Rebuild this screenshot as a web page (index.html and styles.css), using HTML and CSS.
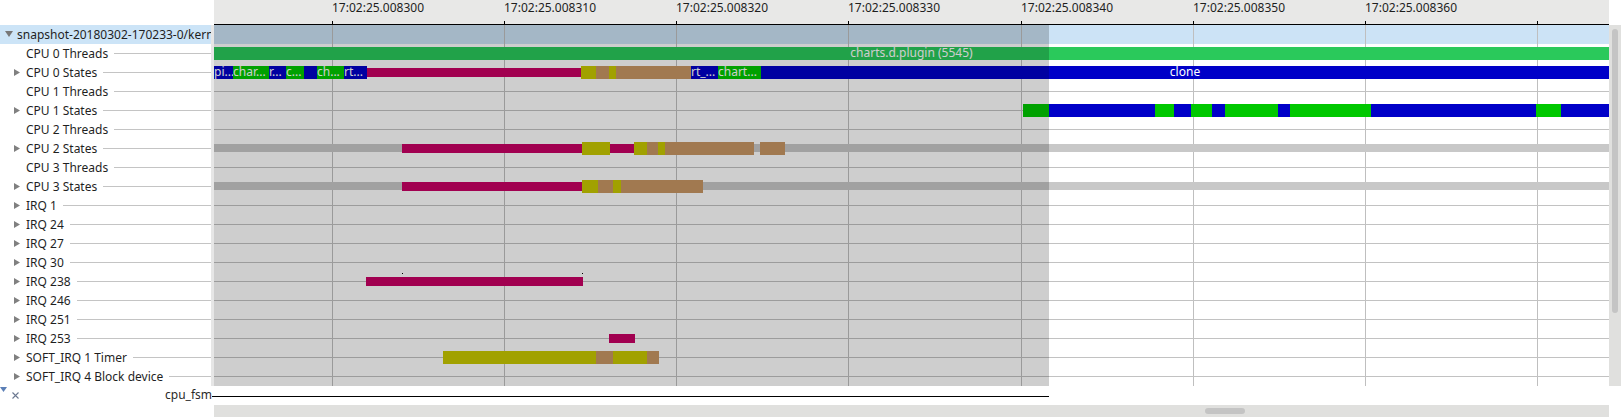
FILE: index.html
```html
<!DOCTYPE html>
<html>
<head>
<meta charset="utf-8">
<title>Resources</title>
<link rel="stylesheet" href="styles.css">
</head>
<body>
<div class="app">
  <div class="top">
    <div class="top-left"></div>
    <div class="ruler">
      <div class="tick" style="left:118px"><span>17:02:25.008300</span></div>
      <div class="tick" style="left:290px"><span>17:02:25.008310</span></div>
      <div class="tick" style="left:462px"><span>17:02:25.008320</span></div>
      <div class="tick" style="left:634px"><span>17:02:25.008330</span></div>
      <div class="tick" style="left:807px"><span>17:02:25.008340</span></div>
      <div class="tick" style="left:979px"><span>17:02:25.008350</span></div>
      <div class="tick" style="left:1151px"><span>17:02:25.008360</span></div>
      <div class="tick" style="left:1323px"></div>
    </div>
    <div class="top-right"></div>
  </div>

  <div class="main">
    <div class="labels">
      <div class="lrow sel"><i class="tri-down"></i><span class="name">snapshot-20180302-170233-0/kernel</span></div>
      <div class="lrow"><i class="tri"></i><span class="name">CPU 0 Threads</span><b class="rule"></b></div>
      <div class="lrow"><i class="tri r"></i><span class="name">CPU 0 States</span><b class="rule"></b></div>
      <div class="lrow"><i class="tri"></i><span class="name">CPU 1 Threads</span><b class="rule"></b></div>
      <div class="lrow"><i class="tri r"></i><span class="name">CPU 1 States</span><b class="rule"></b></div>
      <div class="lrow"><i class="tri"></i><span class="name">CPU 2 Threads</span><b class="rule"></b></div>
      <div class="lrow"><i class="tri r"></i><span class="name">CPU 2 States</span><b class="rule"></b></div>
      <div class="lrow"><i class="tri"></i><span class="name">CPU 3 Threads</span><b class="rule"></b></div>
      <div class="lrow"><i class="tri r"></i><span class="name">CPU 3 States</span><b class="rule"></b></div>
      <div class="lrow"><i class="tri r"></i><span class="name">IRQ 1</span><b class="rule"></b></div>
      <div class="lrow"><i class="tri r"></i><span class="name">IRQ 24</span><b class="rule"></b></div>
      <div class="lrow"><i class="tri r"></i><span class="name">IRQ 27</span><b class="rule"></b></div>
      <div class="lrow"><i class="tri r"></i><span class="name">IRQ 30</span><b class="rule"></b></div>
      <div class="lrow"><i class="tri r"></i><span class="name">IRQ 238</span><b class="rule"></b></div>
      <div class="lrow"><i class="tri r"></i><span class="name">IRQ 246</span><b class="rule"></b></div>
      <div class="lrow"><i class="tri r"></i><span class="name">IRQ 251</span><b class="rule"></b></div>
      <div class="lrow"><i class="tri r"></i><span class="name">IRQ 253</span><b class="rule"></b></div>
      <div class="lrow"><i class="tri r"></i><span class="name">SOFT_IRQ 1 Timer</span><b class="rule"></b></div>
      <div class="lrow"><i class="tri r"></i><span class="name">SOFT_IRQ 4 Block device</span><b class="rule"></b></div>
    </div>
    <div class="sash"></div>
    <div class="canvas">
      <div class="selbg"></div>
      <div class="vl" style="left:118px"></div>
      <div class="vl" style="left:290px"></div>
      <div class="vl" style="left:462px"></div>
      <div class="vl" style="left:634px"></div>
      <div class="vl" style="left:807px"></div>
      <div class="vl" style="left:979px"></div>
      <div class="vl" style="left:1151px"></div>
      <div class="vl" style="left:1323px"></div>
      <div class="trows">
        <div class="trow nl"></div>
        <div class="trow">
          <div class="b h13 tgreen c" style="left:0;width:1395px">charts.d.plugin (5545)</div>
        </div>
        <div class="trow">
          <div class="b h13 blue" style="left:0;width:19px">pi...</div>
          <div class="b h13 green" style="left:19px;width:36px">char...</div>
          <div class="b h13 blue" style="left:55px;width:17px">r...</div>
          <div class="b h13 green" style="left:72px;width:18px">c...</div>
          <div class="b h13 blue" style="left:90px;width:13px"></div>
          <div class="b h13 green" style="left:103px;width:27px">ch...</div>
          <div class="b h13 blue" style="left:130px;width:23px">rt...</div>
          <div class="b h9 mag" style="left:153px;width:214px"></div>
          <div class="b h13 olive" style="left:367px;width:15px"></div>
          <div class="b h13 brown" style="left:382px;width:13px"></div>
          <div class="b h13 olive" style="left:395px;width:7px"></div>
          <div class="b h13 brown" style="left:402px;width:75px"></div>
          <div class="b h13 blue" style="left:477px;width:27px">rt_...</div>
          <div class="b h13 green" style="left:504px;width:43px">chart...</div>
          <div class="b h13 blue c" style="left:547px;width:848px">clone</div>
        </div>
        <div class="trow"></div>
        <div class="trow">
          <div class="b h13 green" style="left:809px;width:26px"></div>
          <div class="b h13 blue" style="left:835px;width:106px"></div>
          <div class="b h13 green" style="left:941px;width:19px"></div>
          <div class="b h13 blue" style="left:960px;width:17px"></div>
          <div class="b h13 green" style="left:977px;width:21px"></div>
          <div class="b h13 blue" style="left:998px;width:13px"></div>
          <div class="b h13 green" style="left:1011px;width:53px"></div>
          <div class="b h13 blue" style="left:1064px;width:12px"></div>
          <div class="b h13 green" style="left:1076px;width:81px"></div>
          <div class="b h13 blue" style="left:1157px;width:165px"></div>
          <div class="b h13 green" style="left:1322px;width:25px"></div>
          <div class="b h13 blue" style="left:1347px;width:48px"></div>
        </div>
        <div class="trow"></div>
        <div class="trow">
          <div class="b h8 idle" style="left:0;width:188px"></div>
          <div class="b h9 mag" style="left:188px;width:180px"></div>
          <div class="b h13 olive" style="left:368px;width:28px"></div>
          <div class="b h9 mag" style="left:396px;width:24px"></div>
          <div class="b h13 olive" style="left:420px;width:13px"></div>
          <div class="b h13 brown" style="left:433px;width:11px"></div>
          <div class="b h13 olive" style="left:444px;width:7px"></div>
          <div class="b h13 brown" style="left:451px;width:89px"></div>
          <div class="b h8 idle" style="left:540px;width:6px"></div>
          <div class="b h13 brown" style="left:546px;width:25px"></div>
          <div class="b h8 idle" style="left:571px;width:824px"></div>
        </div>
        <div class="trow"></div>
        <div class="trow">
          <div class="b h8 idle" style="left:0;width:188px"></div>
          <div class="b h9 mag" style="left:188px;width:180px"></div>
          <div class="b h13 olive" style="left:368px;width:16px"></div>
          <div class="b h13 brown" style="left:384px;width:15px"></div>
          <div class="b h13 olive" style="left:399px;width:8px"></div>
          <div class="b h13 brown" style="left:407px;width:82px"></div>
          <div class="b h8 idle" style="left:489px;width:906px"></div>
        </div>
        <div class="trow"></div>
        <div class="trow"></div>
        <div class="trow"></div>
        <div class="trow"></div>
        <div class="trow">
          <i class="dot" style="left:188px"></i>
          <i class="dot" style="left:368px"></i>
          <div class="b h9 mag" style="left:152px;width:217px"></div>
        </div>
        <div class="trow"></div>
        <div class="trow"></div>
        <div class="trow">
          <div class="b h9 mag" style="left:395px;width:26px"></div>
        </div>
        <div class="trow">
          <div class="b h13 olive" style="left:229px;width:153px"></div>
          <div class="b h13 brown" style="left:382px;width:17px"></div>
          <div class="b h13 olive" style="left:399px;width:34px"></div>
          <div class="b h13 brown" style="left:433px;width:12px"></div>
        </div>
        <div class="trow"></div>
      </div>
      <div class="shade"></div>
    </div>
    <div class="vscroll"><div class="vthumb"></div></div>
  </div>

  <div class="bottom">
    <div class="bl">
      <div class="icons">
        <i class="menu-tri"></i>
        <svg class="close" width="7" height="7" viewBox="0 0 7 7"><path d="M0.5 0.5 L6.5 6.5 M6.5 0.5 L0.5 6.5" stroke="#6b7890" stroke-width="1.1" fill="none"/></svg>
      </div>
      <span class="fsm">cpu_fsm</span>
    </div>
    <div class="fsmline"></div>
  </div>

  <div class="hsrow">
    <div class="hsleft"></div>
    <div class="hscroll"><div class="hthumb"></div></div>
  </div>
</div>
</body>
</html>
```

FILE: styles.css
```css
* { box-sizing: border-box; margin: 0; padding: 0; }
html, body { width: 1621px; height: 417px; overflow: hidden; background: #fff; }
body { font-family: "Noto Sans", "DejaVu Sans", sans-serif; font-size: 12px; color: #1f1f1f; }

.app { display: flex; flex-direction: column; width: 1621px; height: 417px; }

/* header / time ruler */
.top { display: flex; height: 25px; }
.top-left { width: 214px; flex: none; }
.top-right { width: 12px; flex: none; }
.ruler { position: relative; width: 1395px; height: 25px; flex: none; background: #e8e8e7; border-bottom: 1px solid #000; }
.tick { position: absolute; top: 0; width: 1px; height: 24px; }
.tick::after { content: ""; position: absolute; left: 0; bottom: 0; width: 1px; height: 3px; background: #000; }
.tick span { position: absolute; left: 0; top: 0; line-height: 15px; white-space: nowrap; color: #1e1e1e; }

/* main area */
.main { display: flex; height: 361px; }
.labels { width: 211px; flex: none; display: flex; flex-direction: column; overflow: hidden; background: #fff; }
.lrow { height: 19px; flex: none; display: flex; align-items: center; padding-left: 14px; white-space: nowrap; overflow: hidden; }
.lrow.sel { background: #cce4f7; padding-left: 5px; }
.name { line-height: 16px; }
.tri { display: block; flex: none; width: 6px; height: 7px; margin-right: 6px; }
.tri.r { background: #808080; clip-path: polygon(0 0, 100% 50%, 0 100%); }
.tri-down { display: block; flex: none; width: 8px; height: 6px; margin: -1px 4px 0 0; background: #777; clip-path: polygon(0 0, 100% 0, 50% 100%); }
.rule { display: block; flex: 1; height: 1px; margin-left: 6px; background: #c4c4c4; }

.sash { width: 3px; flex: none; background: #e6e6e6; }

.canvas { position: relative; width: 1395px; height: 361px; flex: none; overflow: hidden; background: #fff; }
.selbg { position: absolute; left: 0; top: 0; width: 100%; height: 19px; background: #cce3f6; }
.vl { position: absolute; top: 0; bottom: 0; width: 1px; background: #bfbfbf; }
.trows { position: relative; display: flex; flex-direction: column; }
.trow { position: relative; height: 19px; flex: none; }
.trow::before { content: ""; position: absolute; left: 0; right: 0; top: 9px; height: 1px; background: #c2c2c2; }
.trow.nl::before { display: none; }
.dot { position: absolute; top: 1px; width: 1px; height: 1px; background: #000; }

.b { position: absolute; overflow: hidden; white-space: nowrap; color: #fff; font-size: 12px; line-height: 11px; }
.b.c { text-align: center; }
.h13 { top: 3px; height: 13px; }
.h9 { top: 5px; height: 9px; }
.h8 { top: 5px; height: 8px; }
.tgreen { background: #2ac95b; }
.blue { background: #0000c8; }
.green { background: #00c800; }
.mag { background: #c80064; }
.olive { background: #c8c800; }
.brown { background: #c89664; }
.idle { background: #c8c8c8; }

.shade { position: absolute; left: 0; top: 0; width: 835px; height: 361px; background: rgba(0, 0, 0, 0.192); }

.vscroll { width: 12px; flex: none; height: 361px; background: #e0e0de; padding: 4px 3px 0 3px; }
.vthumb { width: 6px; height: 284px; border-radius: 3px; background: #c4c4c4; }

/* bottom marker row */
.bottom { display: flex; height: 19px; }
.bl { width: 212px; flex: none; display: flex; align-items: flex-start; }
.icons { display: flex; align-items: flex-start; width: 30px; }
.menu-tri { display: block; width: 7px; height: 5px; margin-top: 1px; background: #5b7fb6; clip-path: polygon(0 0, 100% 0, 50% 100%); }
.close { display: block; margin: 6px 0 0 5px; }
.fsm { margin-left: auto; line-height: 17px; color: #2a2a2a; }
.fsmline { width: 837px; height: 1px; margin-top: 10px; background: #000; }

/* horizontal scrollbar */
.hsrow { display: flex; height: 12px; }
.hsleft { width: 214px; flex: none; }
.hscroll { width: 1395px; flex: none; background: #e0e0de; padding: 3px 0 0 991px; }
.hthumb { width: 40px; height: 6px; border-radius: 3px; background: #c4c4c4; }
```
